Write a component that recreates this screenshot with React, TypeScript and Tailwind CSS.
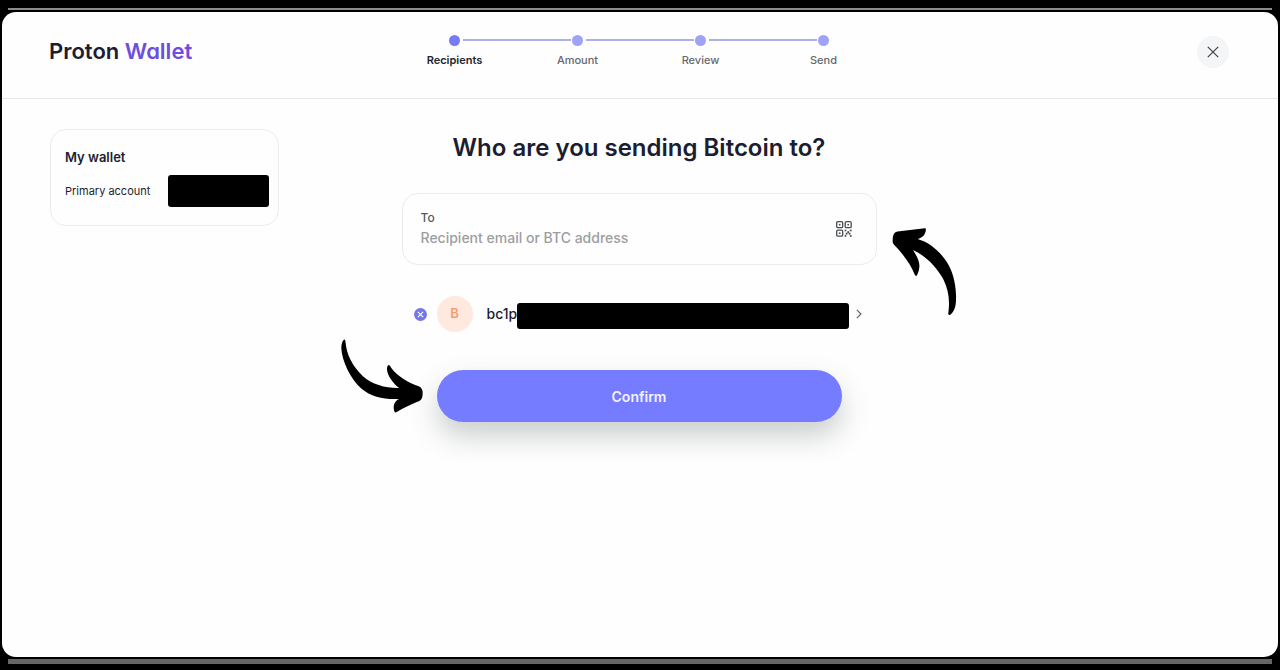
import React, { useState } from 'react';

const steps = ['Recipients', 'Amount', 'Review', 'Send'];

function Stepper({ current }: { current: number }) {
  return (
    <ol className="flex pt-[23px]">
      {steps.map((step, i) => (
        <li
          key={step}
          aria-current={i === current ? 'step' : undefined}
          className="relative flex w-[123px] flex-col items-center gap-1.5"
        >
          <span className={`size-[11px] rounded-full ${i === current ? 'bg-[#767cf5]' : 'bg-[#9ea3f8]'}`} />
          {i < steps.length - 1 && (
            <span className="absolute top-[4px] left-[70px] h-0.5 w-[108px] bg-[#a9b1e6]" />
          )}
          <span
            className={`text-[11px] leading-4 ${
              i === current ? 'font-semibold text-[#22242c]' : 'font-medium text-[#66686f]'
            }`}
          >
            {step}
          </span>
        </li>
      ))}
    </ol>
  );
}

function CloseIcon() {
  return (
    <svg viewBox="0 0 12 12" className="size-3" fill="none" stroke="#3c4048" strokeWidth="1.2" aria-hidden="true">
      <path d="M0.8 0.8 11.2 11.2M11.2 0.8 0.8 11.2" />
    </svg>
  );
}

function QrIcon() {
  return (
    <svg viewBox="0 0 16 16" className="size-4" fill="none" stroke="#4a4c52" strokeWidth="1.3" aria-hidden="true">
      <rect x="0.7" y="0.7" width="6" height="6" rx="1.2" />
      <rect x="9.2" y="0.7" width="6" height="6" rx="1.2" />
      <rect x="0.7" y="9.2" width="6" height="6" rx="1.2" />
      <g fill="#4a4c52" stroke="none">
        <rect x="2.9" y="2.9" width="1.6" height="1.6" />
        <rect x="11.4" y="2.9" width="1.6" height="1.6" />
        <rect x="2.9" y="11.4" width="1.6" height="1.6" />
        <rect x="8.6" y="8.6" width="1.7" height="1.7" />
        <rect x="13.9" y="8.6" width="1.7" height="1.7" />
        <rect x="11.3" y="10.2" width="1.8" height="1.8" />
        <rect x="9.7" y="11.8" width="1.8" height="1.8" />
        <rect x="12.7" y="11.8" width="1.8" height="1.8" />
        <rect x="8.6" y="14.1" width="1.7" height="1.7" />
        <rect x="13.9" y="14.1" width="1.7" height="1.7" />
      </g>
    </svg>
  );
}

function FieldArrow() {
  return (
    <svg
      viewBox="276 146 195 264"
      className="absolute top-[34px] left-full ml-4 h-[88px] w-[65px]"
      aria-hidden="true"
    >
      <path d="M280 168C282 160 289 156 299 156L374 147C378 146 378 151 377 156C374 168 367 176 353 179C390 190 424 218 447 259C466 295 471 345 467 375C465 390 458 402 451 406C446 408 444 405 445 400C450 365 446 332 430 300C409 262 378 230 339 212C350 229 360 248 358 263C357 275 353 285 350 289C348 291 345 288 343 283C331 254 308 222 281 195C276 187 278 176 280 168Z" />
    </svg>
  );
}

function ConfirmArrow() {
  return (
    <svg
      viewBox="33 27 249 222"
      className="absolute -top-[31px] right-full mr-[13px] h-[74px] w-[83px]"
      aria-hidden="true"
    >
      <path d="M42 29C46 28 46 33 47 40C50 72 66 108 98 138C127 164 168 175 207 174C190 160 174 141 171 120C170 112 173 106 176 105C179 105 181 109 184 114C202 138 233 158 266 169C274 172 279 180 278 190C278 201 276 209 268 213C244 222 220 234 200 246C195 249 193 246 192 240C189 226 194 213 207 207C165 209 125 203 93 175C60 145 36 93 34 55C34 43 37 32 42 29Z" />
    </svg>
  );
}

export default function App() {
  const [recipient, setRecipient] = useState('');

  return (
    <div className="flex min-h-screen flex-col bg-black pt-2 pb-1.5 font-['Inter',sans-serif] text-[#1c1d30]">
      <div className="mx-2 h-0.5 bg-[#8b8b8b]" />
      <div className="mx-0.5 mt-[2px] flex grow flex-col rounded-[14px] bg-[#fefefe]">
        <header className="grid h-[87px] grid-cols-[1fr_auto_1fr] items-start border-b border-[#e6e6e9] pr-[49px] pl-[47px]">
          <a
            href="#"
            aria-label="Proton Wallet"
            className="pt-[23px] text-[22px] leading-8 font-semibold [font-feature-settings:'cv11']"
          >
            Proton <span className="text-[#6d4ee0]">Wallet</span>
          </a>
          <Stepper current={0} />
          <button
            type="button"
            aria-label="Close"
            className="mt-6 flex size-8 items-center justify-center justify-self-end rounded-full bg-[#f3f5f7]"
          >
            <CloseIcon />
          </button>
        </header>

        <main className="grid grow grid-cols-[1fr_475px_1fr] items-start pt-[30px] pr-[50px] pl-12">
          <aside className="h-[97px] w-[229px] rounded-2xl border border-[#ececee] pt-[17px] pr-[9px] pl-[14px]">
            <h2 className="text-[13px] leading-5 font-semibold">My wallet</h2>
            <div className="mt-2 flex items-center justify-between">
              <span className="text-[11px] leading-4">Primary account</span>
              <span className="h-8 w-[101px] rounded-[3px] bg-black" />
            </div>
          </aside>

          <section className="flex flex-col">
            <h1 className="text-center text-[24px] leading-[38px] font-semibold">Who are you sending Bitcoin to?</h1>

            <div className="relative mt-[26px] flex h-[72px] items-center justify-between rounded-2xl border border-[#ececee] pr-6 pl-[18px]">
              <div className="flex grow flex-col pb-0.5">
                <label htmlFor="recipient" className="text-[12px] leading-5 font-medium text-[#56585e]">
                  To
                </label>
                <input
                  id="recipient"
                  value={recipient}
                  onChange={(e) => setRecipient(e.target.value)}
                  placeholder="Recipient email or BTC address"
                  className="h-5 w-full bg-transparent text-[14px] leading-5 font-medium outline-none placeholder:text-[#9c9ea2]"
                />
              </div>
              <button type="button" aria-label="Scan QR code">
                <QrIcon />
              </button>
              <FieldArrow />
            </div>

            <div className="mt-[31px] flex h-9 items-center pr-[15px] pl-3">
              <button
                type="button"
                aria-label="Remove recipient"
                className="flex size-[13px] items-center justify-center rounded-full bg-[#7377ea]"
              >
                <svg viewBox="0 0 8 8" className="size-[7px]" fill="none" stroke="#fff" strokeWidth="1.2" aria-hidden="true">
                  <path d="M1 1 7 7M7 1 1 7" />
                </svg>
              </button>
              <span className="ml-2.5 flex size-9 items-center justify-center rounded-full bg-[#ffe9df] text-[13px] font-semibold text-[#f3a070]">
                B
              </span>
              <span className="ml-[14px] text-[14px] leading-5 font-medium">bc1p</span>
              <span className="mt-1 h-[26px] grow rounded-[3px] bg-black" />
              <button type="button" aria-label="Recipient details" className="ml-[7px]">
                <svg viewBox="0 0 6 10" className="h-2.5 w-1.5" fill="none" stroke="#5c5e66" strokeWidth="1.1" aria-hidden="true">
                  <path d="M0.8 0.8 5 5 0.8 9.2" />
                </svg>
              </button>
            </div>

            <div className="relative mx-[35px] mt-[38px]">
              <button
                type="button"
                className="h-[52px] w-full rounded-full bg-[#767cff] text-[14px] font-semibold text-[#f3f3ff] shadow-[0_14px_28px_rgba(50,60,65,0.25)]"
              >
                Confirm
              </button>
              <ConfirmArrow />
            </div>
          </section>
        </main>
      </div>
      <div className="mx-2 mt-0.5 h-[5px] bg-[#666]" />
    </div>
  );
}
